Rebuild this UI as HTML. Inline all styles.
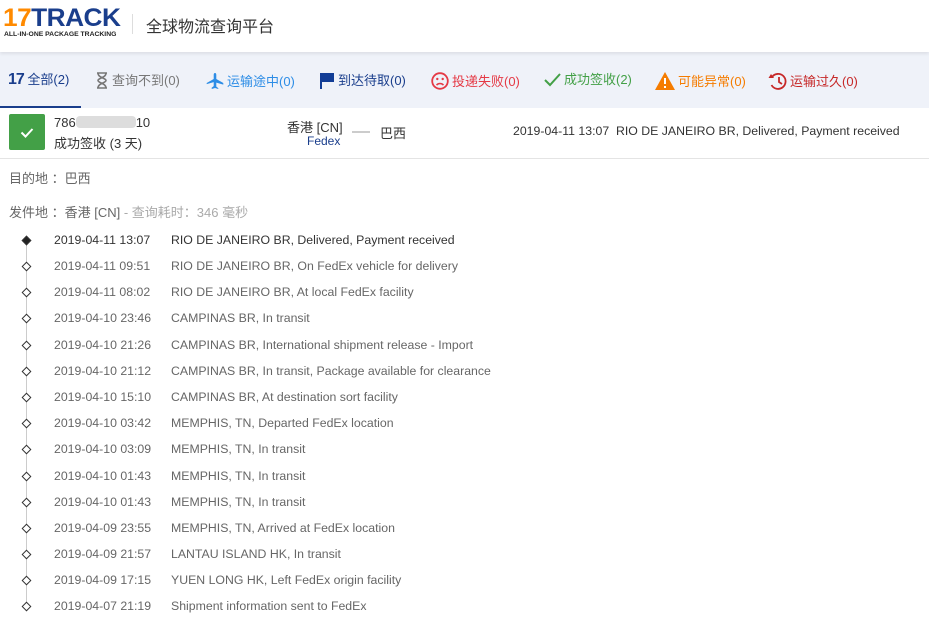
<!DOCTYPE html>
<html><head><meta charset="utf-8"><style>
*{margin:0;padding:0;box-sizing:border-box}
body{width:929px;height:618px;overflow:hidden;background:#fff;font-family:"Liberation Sans","Noto Sans CJK SC",sans-serif;color:#333;position:relative}
.hdr{position:absolute;left:0;top:0;width:929px;height:52px;background:#fff;box-shadow:0 2px 3px rgba(0,0,0,.08);z-index:2}
.logo{position:absolute;left:3px;top:6px;font-weight:bold;font-size:25px;letter-spacing:-0.5px;line-height:25px;transform:scaleX(1.05);transform-origin:left}
.logo .a{color:#ff8a00}.logo .b{color:#1a3e8c}
.sub{position:absolute;left:4px;top:31px;font-size:6.8px;font-weight:bold;color:#222}
.sep{position:absolute;left:132px;top:14px;width:1px;height:20px;background:#ddd}
.title{position:absolute;left:146px;top:13px;font-size:16px;color:#333}
.tabs{position:absolute;left:0;top:52px;width:929px;height:56px;background:#eff2f9}
.tab{position:absolute;top:20px;font-size:13px;white-space:nowrap;line-height:16px}
.tab svg{vertical-align:-4px;margin-right:3px}
.ul{position:absolute;left:0;top:106px;width:81px;height:2px;background:#1a3e8c}
.row{position:absolute;left:0;top:108px;width:929px;height:51px;border-bottom:1px solid #e4e4e4}
.chk{position:absolute;left:9px;top:6px;width:36px;height:36px;background:#43a047;border-radius:2px}
.t{position:absolute;font-size:13px;white-space:nowrap}
.ev{position:absolute;left:0;font-size:12.3px;color:#666;white-space:nowrap}
.ev .d{position:absolute;left:54px}.ev .m{position:absolute;left:171px}
.dia{position:absolute;left:23px;top:4px;width:7px;height:7px;border:1.3px solid #333;background:#fff;transform:rotate(45deg)}
.vl{position:absolute;left:26px;top:244px;width:1px;height:364px;background:#ccc}
</style></head><body>
<div class="hdr">
<div class="logo"><span class="a">17</span><span class="b">TRACK</span></div>
<div class="sub">ALL-IN-ONE PACKAGE TRACKING</div>
<div class="sep"></div>
<div class="title">全球物流查询平台</div>
</div>
<div class="tabs">
<div class="tab" style="left:8px;color:#1a3e8c"><b style="font-size:16px;letter-spacing:-1px">17</b> 全部(2)</div>
<div class="tab" style="left:95px;color:#777"><svg width="14" height="17" viewBox="0 0 14 17"><path d="M2 1h10M2 16h10M3 1c0 5 8 5 8 7.5S3 11 3 16M11 1c0 5-8 5-8 7.5S11 11 11 16" fill="none" stroke="#777" stroke-width="1.6"/></svg>查询不到(0)</div>
<div class="tab" style="left:206px;color:#2d8de6"><svg width="18" height="18" viewBox="0 0 18 18"><path d="M9 1c1 0 1.3 1 1.3 2v4l7 4v1.6l-7-2v4l2 1.5V17L9 16l-3.3 1v-1.4l2-1.5v-4l-7 2V11l7-4V3c0-1 .3-2 1.3-2z" fill="#2d8de6"/></svg>运输途中(0)</div>
<div class="tab" style="left:320px;color:#1a3e8c"><svg width="15" height="17" viewBox="0 0 15 17"><path d="M1 1v16" stroke="#123d96" stroke-width="2"/><path d="M2 1h12v9H2z" fill="#123d96"/></svg>到达待取(0)</div>
<div class="tab" style="left:431px;color:#e53945"><svg width="18" height="18" viewBox="0 0 18 18"><circle cx="9" cy="9" r="7.8" fill="none" stroke="#e53945" stroke-width="1.8"/><circle cx="6.3" cy="7" r="1.2" fill="#e53945"/><circle cx="11.7" cy="7" r="1.2" fill="#e53945"/><path d="M5.5 13c2-2 5-2 7 0" fill="none" stroke="#e53945" stroke-width="1.6"/></svg>投递失败(0)</div>
<div class="tab" style="left:544px;color:#43a047"><svg width="17" height="16" viewBox="0 0 17 16"><path d="M1 8l5 5L16 2" fill="none" stroke="#43a047" stroke-width="2"/></svg>成功签收(2)</div>
<div class="tab" style="left:655px;color:#f57c00"><svg width="20" height="18" viewBox="0 0 20 18"><path d="M10 0L20 18H0z" fill="#f57c00"/><path d="M10 6v6M10 14v2" stroke="#fff" stroke-width="2"/></svg>可能异常(0)</div>
<div class="tab" style="left:768px;color:#c62828"><svg width="19" height="18" viewBox="0 0 19 18"><path d="M4 5A7.5 7.5 0 1 1 3.5 13" fill="none" stroke="#c62828" stroke-width="1.8"/><path d="M0.5 6h5.5l-3-4z" fill="#c62828"/><path d="M11 5v5l3 2" fill="none" stroke="#c62828" stroke-width="1.8"/></svg>运输过久(0)</div>
</div>
<div class="ul"></div>
<div class="row">
<div class="chk"><svg width="36" height="36" viewBox="0 0 36 36"><path d="M12.5 18.5l4 4 7-7.5" fill="none" stroke="#fff" stroke-width="2"/></svg></div>
<div class="t" style="left:54px;top:7px">786<span style="display:inline-block;width:60px;height:12px;background:#ddd;vertical-align:-1px;border-radius:4px"></span>10</div>
<div class="t" style="left:54px;top:25px">成功签收 (3 天)</div>
<div class="t" style="left:287px;top:9px">香港 [CN]</div>
<div class="t" style="left:307px;top:26px;color:#1a3e8c;font-size:12px">Fedex</div>
<div style="position:absolute;left:352px;top:23px;width:18px;height:2px;background:#ccc"></div>
<div class="t" style="left:380px;top:15px">巴西</div>
<div class="t" style="left:513px;top:16px;font-size:12.3px">2019-04-11 13:07 &nbsp;RIO DE JANEIRO BR, Delivered, Payment received</div>
</div>
<div class="t" style="left:9px;top:168px;color:#666">目的地 ：巴西</div>
<div class="t" style="left:9px;top:202px;color:#666">发件地 ：香港 [CN]<span style="color:#aaa"> - 查询耗时：346 毫秒</span></div>
<div class="vl"></div>
<div class="ev" style="top:233px;color:#333"><div class="dia" style="background:#222"></div><span class="d">2019-04-11 13:07</span><span class="m">RIO DE JANEIRO BR, Delivered, Payment received</span></div>
<div class="ev" style="top:259px"><div class="dia"></div><span class="d">2019-04-11 09:51</span><span class="m">RIO DE JANEIRO BR, On FedEx vehicle for delivery</span></div>
<div class="ev" style="top:285px"><div class="dia"></div><span class="d">2019-04-11 08:02</span><span class="m">RIO DE JANEIRO BR, At local FedEx facility</span></div>
<div class="ev" style="top:311px"><div class="dia"></div><span class="d">2019-04-10 23:46</span><span class="m">CAMPINAS BR, In transit</span></div>
<div class="ev" style="top:338px"><div class="dia"></div><span class="d">2019-04-10 21:26</span><span class="m">CAMPINAS BR, International shipment release - Import</span></div>
<div class="ev" style="top:364px"><div class="dia"></div><span class="d">2019-04-10 21:12</span><span class="m">CAMPINAS BR, In transit, Package available for clearance</span></div>
<div class="ev" style="top:390px"><div class="dia"></div><span class="d">2019-04-10 15:10</span><span class="m">CAMPINAS BR, At destination sort facility</span></div>
<div class="ev" style="top:416px"><div class="dia"></div><span class="d">2019-04-10 03:42</span><span class="m">MEMPHIS, TN, Departed FedEx location</span></div>
<div class="ev" style="top:442px"><div class="dia"></div><span class="d">2019-04-10 03:09</span><span class="m">MEMPHIS, TN, In transit</span></div>
<div class="ev" style="top:469px"><div class="dia"></div><span class="d">2019-04-10 01:43</span><span class="m">MEMPHIS, TN, In transit</span></div>
<div class="ev" style="top:495px"><div class="dia"></div><span class="d">2019-04-10 01:43</span><span class="m">MEMPHIS, TN, In transit</span></div>
<div class="ev" style="top:521px"><div class="dia"></div><span class="d">2019-04-09 23:55</span><span class="m">MEMPHIS, TN, Arrived at FedEx location</span></div>
<div class="ev" style="top:547px"><div class="dia"></div><span class="d">2019-04-09 21:57</span><span class="m">LANTAU ISLAND HK, In transit</span></div>
<div class="ev" style="top:573px"><div class="dia"></div><span class="d">2019-04-09 17:15</span><span class="m">YUEN LONG HK, Left FedEx origin facility</span></div>
<div class="ev" style="top:599px"><div class="dia"></div><span class="d">2019-04-07 21:19</span><span class="m">Shipment information sent to FedEx</span></div>
</body></html>
